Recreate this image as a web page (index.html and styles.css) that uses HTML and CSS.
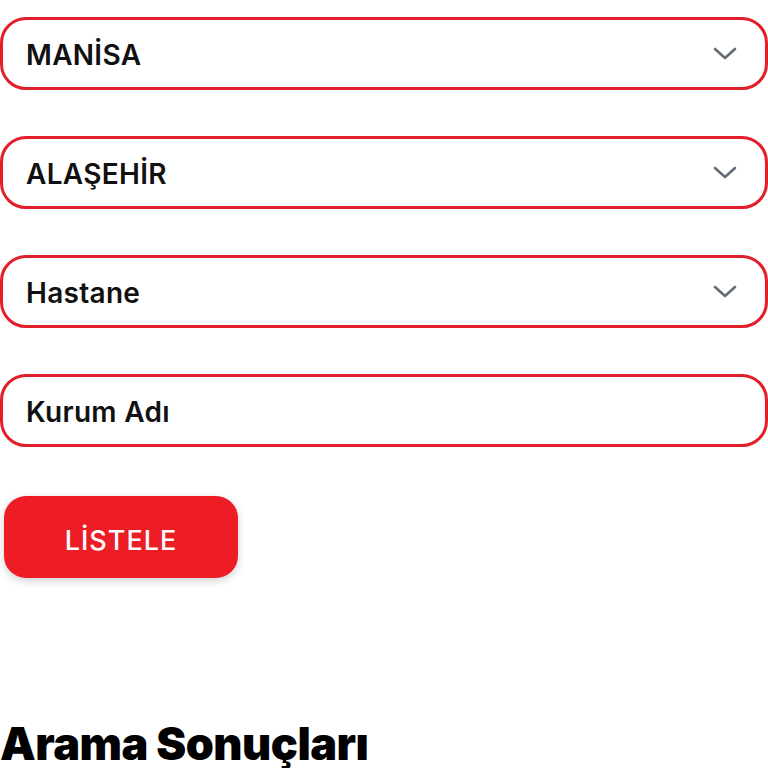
FILE: index.html
```html
<!DOCTYPE html>
<html lang="tr">
<head>
    <meta charset="UTF-8">
    <meta name="viewport" content="width=device-width, initial-scale=1.0">
    <title>Kurum Arama</title>
    <link rel="stylesheet" href="styles.css">
</head>
<body>
    <div class="search-form">
        <div class="field select-field">
            <span class="field-value">MANİSA</span>
            <svg class="chevron" width="24" height="14" viewBox="0 0 24 14"><path d="M2 2 L12 11 L22 2" fill="none" stroke="#666c75" stroke-width="2.6" stroke-linecap="round" stroke-linejoin="round"/></svg>
        </div>
        <div class="field select-field">
            <span class="field-value">ALAŞEHİR</span>
            <svg class="chevron" width="24" height="14" viewBox="0 0 24 14"><path d="M2 2 L12 11 L22 2" fill="none" stroke="#666c75" stroke-width="2.6" stroke-linecap="round" stroke-linejoin="round"/></svg>
        </div>
        <div class="field select-field">
            <span class="field-value">Hastane</span>
            <svg class="chevron" width="24" height="14" viewBox="0 0 24 14"><path d="M2 2 L12 11 L22 2" fill="none" stroke="#666c75" stroke-width="2.6" stroke-linecap="round" stroke-linejoin="round"/></svg>
        </div>
        <div class="field">
            <span class="field-value">Kurum Adı</span>
        </div>
        <div class="actions">
            <button type="button" class="button">LİSTELE</button>
        </div>
    </div>

    <h2 class="results-title">Arama Sonuçları</h2>
</body>
</html>
```

FILE: styles.css
```css
body {
    font-family: Inter, 'Noto Sans', sans-serif;
    margin: 0;
    padding: 0;
    background-color: #fff;
    color: #111;
}
.search-form {
    padding-top: 17px;
    display: flex;
    flex-direction: column;
    gap: 46px;
}
.field {
    height: 73px;
    box-sizing: border-box;
    border: 3px solid #e21f2b;
    border-radius: 26px;
    display: flex;
    align-items: center;
    justify-content: space-between;
    padding: 3px 28px 0 23px;
}
.field-value {
    font-size: 28px;
    font-weight: 600;
    color: #111;
    letter-spacing: 0.3px;
}
.chevron {
    display: block;
    margin-top: -3px;
}
.actions {
    margin-top: 3px;
    padding-left: 4px;
}
.button {
    background-color: #ee1c25;
    color: #fff;
    border: none;
    width: 234px;
    height: 82px;
    padding-top: 7px;
    border-radius: 22px;
    font-family: Inter, 'Noto Sans', sans-serif;
    font-size: 27px;
    font-weight: 500;
    letter-spacing: 1px;
    box-shadow: 0 3px 8px rgba(0, 0, 0, 0.18);
    cursor: pointer;
}
.results-title {
    margin: 139px 0 0 0;
    font-size: 45px;
    font-weight: 900;
    color: #000;
    letter-spacing: -0.5px;
    line-height: 1.2;
}
```
